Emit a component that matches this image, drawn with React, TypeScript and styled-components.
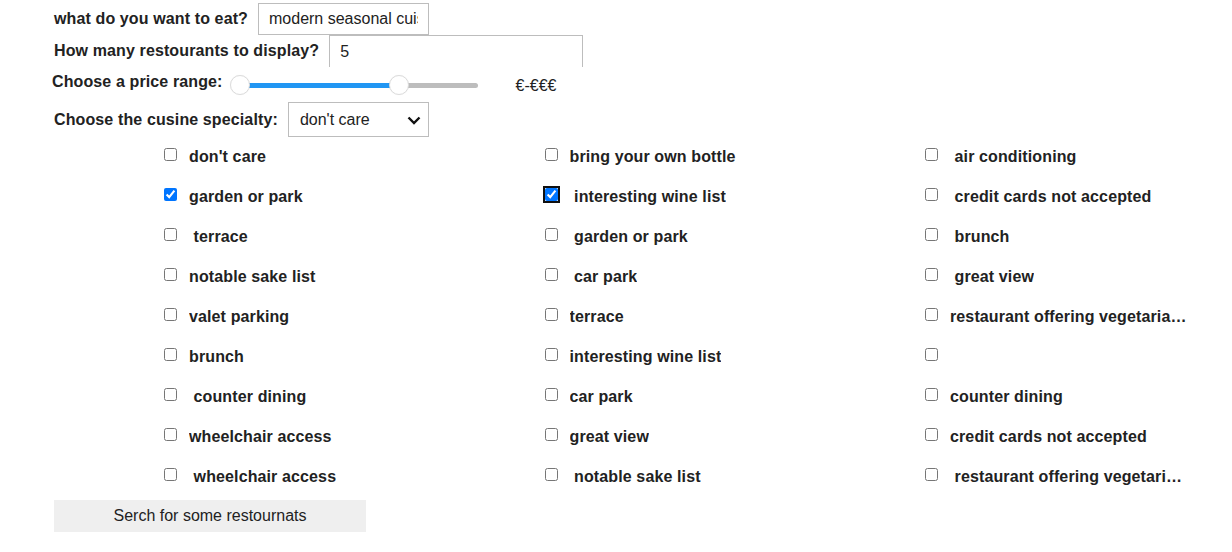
import React from "react";
import styled, { createGlobalStyle } from "styled-components";

const Global = createGlobalStyle`
  html, body { margin: 0; padding: 0; background: #fff; }
  body { font-family: "Liberation Sans", Arial, sans-serif; color: #222; }
  * { box-sizing: border-box; }
`;

const Page = styled.form`
  display: flex;
  flex-direction: column;
  padding: 3px 0 0 0;
  width: 100%;
`;

const FieldRow = styled.div<{ $h: number; $shift?: number }>`
  display: flex;
  align-items: center;
  gap: 10px;
  height: ${(p) => p.$h}px;
  padding-left: ${(p) => 54 + (p.$shift ?? 0)}px;
`;

const Label = styled.label`
  font-size: 16px;
  font-weight: bold;
  line-height: 18px;
  letter-spacing: 0.12px;
  color: #222;
  white-space: nowrap;
`;

const TextInput = styled.input<{ $w: number; $open?: boolean }>`
  width: ${(p) => p.$w}px;
  height: 32px;
  border: 1px solid #bdbdbd;
  ${(p) => (p.$open ? "border-bottom: none;" : "")}
  padding: 0 10px;
  font: 16px "Liberation Sans", Arial, sans-serif;
  color: #222;
  background: #fff;
  outline: none;
`;

const PriceRow = styled.div`
  display: flex;
  align-items: flex-start;
  height: 35px;
  padding-left: 52px;
`;

const PriceLabel = styled(Label)`
  margin-top: 6px;
`;

const SliderBox = styled.div`
  position: relative;
  width: 258px;
  height: 20px;
  margin: 8px 0 0 7px;
  padding: 0 10px;
  display: flex;
  align-items: center;
`;

const Track = styled.div`
  position: relative;
  flex: 1;
  height: 5px;
  border-radius: 3px;
  background: #bdbdbd;
`;

const Fill = styled.div`
  position: absolute;
  top: 0;
  bottom: 0;
  background: #2196f3;
`;

const Thumb = styled.div`
  position: absolute;
  top: 50%;
  width: 20px;
  height: 20px;
  margin: -10px 0 0 -10px;
  border-radius: 50%;
  background: #fff;
  border: 1px solid #dcdcdc;
  box-shadow: 0 0 1px rgba(0, 0, 0, 0.08);
`;

const PriceText = styled.span`
  margin: 10px 0 0 28px;
  font-size: 16px;
  line-height: 18px;
  color: #222;
`;

const SelectBox = styled.div`
  position: relative;
  width: 141px;
  height: 35px;
  border: 1px solid #bdbdbd;
  display: flex;
  align-items: center;
  padding-left: 11px;
  font-size: 16px;
  color: #222;
  background: #fff;
`;

const Chevron = styled.svg`
  position: absolute;
  right: 7px;
  top: 13px;
`;

const Grid = styled.div`
  display: grid;
  grid-template-columns: 380.5px 380.5px minmax(0, 1fr);
  grid-auto-rows: 40px;
  padding-left: 164px;
`;

const Option = styled.div`
  display: flex;
  align-items: flex-start;
  min-width: 0;
`;

const Box = styled.input<{ $focus?: boolean }>`
  width: 13px;
  height: 13px;
  margin: 11px 0 0 0;
  flex: none;
  ${(p) =>
    p.$focus ? "outline: 2px solid #101010; outline-offset: 0px; border-radius: 2px;" : "outline: none;"}
`;

const OptionText = styled.span`
  margin: 11px 0 0 12px;
  font-size: 16px;
  font-weight: bold;
  line-height: 18px;
  letter-spacing: 0.12px;
  color: #222;
  white-space: pre;
  overflow: hidden;
  text-overflow: ellipsis;
  max-width: 237px;
`;

const SearchButton = styled.button`
  align-self: flex-start;
  margin: 3px 0 0 54px;
  width: 312px;
  height: 32px;
  border: none;
  background: #efefef;
  font: 16px "Liberation Sans", Arial, sans-serif;
  color: #222;
  padding: 0;
`;

const col1 = ["don't care", "garden or park", " terrace", "notable sake list", "valet parking", "brunch", " counter dining", "wheelchair access", " wheelchair access"];
const col2 = ["bring your own bottle", " interesting wine list", " garden or park", " car park", "terrace", "interesting wine list", "car park", "great view", " notable sake list"];
const col3 = [" air conditioning", " credit cards not accepted", " brunch", " great view", "restaurant offering vegetarian menus", "", "counter dining", "credit cards not accepted", " restaurant offering vegetarian menus"];

type Item = { text: string; checked?: boolean; focus?: boolean };

const items: Item[] = [];
for (let i = 0; i < 9; i++) {
  items.push({ text: col1[i], checked: i === 1 });
  items.push({ text: col2[i], checked: i === 1, focus: i === 1 });
  items.push({ text: col3[i] });
}

const low = 0;
const high = 67;

export default function App() {
  return (
    <>
      <Global />
      <Page onSubmit={(e) => e.preventDefault()}>
        <FieldRow $h={32}>
          <Label>what do you want to eat?</Label>
          <TextInput $w={171} defaultValue="modern seasonal cuisine" />
        </FieldRow>
        <FieldRow $h={32}>
          <Label>How many restourants to display?</Label>
          <TextInput $w={254} $open defaultValue="5" />
        </FieldRow>
        <PriceRow>
          <PriceLabel>Choose a price range:</PriceLabel>
          <SliderBox>
            <Track>
              <Fill style={{ left: `${low}%`, width: `${high - low}%` }} />
              <Thumb style={{ left: `${low}%` }} />
              <Thumb style={{ left: `${high}%` }} />
            </Track>
          </SliderBox>
          <PriceText>€-€€€</PriceText>
        </PriceRow>
        <FieldRow $h={35}>
          <Label>Choose the cusine specialty:</Label>
          <SelectBox>
            don't care
            <Chevron width="14" height="9" viewBox="0 0 14 9">
              <path d="M1.5 1.5 L7 7 L12.5 1.5" fill="none" stroke="#111" strokeWidth="2.4" />
            </Chevron>
          </SelectBox>
        </FieldRow>
        <Grid>
          {items.map((it, i) => (
            <Option key={i}>
              <Box type="checkbox" defaultChecked={it.checked} $focus={it.focus} />
              <OptionText>{it.text}</OptionText>
            </Option>
          ))}
        </Grid>
        <SearchButton type="button">Serch for some restournats</SearchButton>
      </Page>
    </>
  );
}
